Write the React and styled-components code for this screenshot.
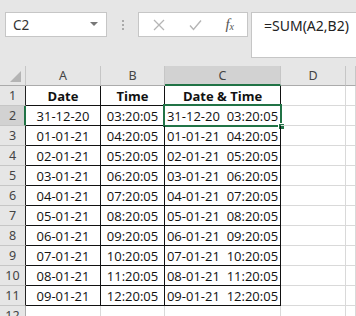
import React from 'react';
import styled, { createGlobalStyle } from 'styled-components';

const rows = [
  ['31-12-20', '03:20:05'],
  ['01-01-21', '04:20:05'],
  ['02-01-21', '05:20:05'],
  ['03-01-21', '06:20:05'],
  ['04-01-21', '07:20:05'],
  ['05-01-21', '08:20:05'],
  ['06-01-21', '09:20:05'],
  ['07-01-21', '10:20:05'],
  ['08-01-21', '11:20:05'],
  ['09-01-21', '12:20:05'],
];

const columns = ['A', 'B', 'C', 'D', ''];

export default function App() {
  return (
    <>
      <Global />
      <Toolbar>
        <NameBox>
          <span>C2</span>
          <Caret />
        </NameBox>
        <Grip>
          <i /><i /><i />
        </Grip>
        <FxBox>
          <svg width="14" height="14" viewBox="0 0 14 14">
            <path d="M2 2 L12 12 M12 2 L2 12" stroke="#b5b5b5" strokeWidth="1.3" fill="none" />
          </svg>
          <svg width="15" height="14" viewBox="0 0 15 14">
            <path d="M2 7.5 L5.5 11.5 L13 2.5" stroke="#b5b5b5" strokeWidth="1.4" fill="none" />
          </svg>
          <Fx>f<sub>x</sub></Fx>
        </FxBox>
        <FormulaInput>=SUM(A2,B2)</FormulaInput>
      </Toolbar>

      <Sheet>
        <Corner><Triangle /></Corner>
        {columns.map((c, i) => (
          <ColHead key={i} $active={c === 'C'}>{c}</ColHead>
        ))}

        <RowHead $table>1</RowHead>
        <Cell $table $bold>Date</Cell>
        <Cell $table $bold>Time</Cell>
        <Cell $table $bold>Date &amp; Time</Cell>
        <Cell />
        <Cell />

        {rows.map(([d, t], i) => (
          <React.Fragment key={i}>
            <RowHead $table $active={i === 0}>{i + 2}</RowHead>
            <Cell $table>{d}</Cell>
            <Cell $table>{t}</Cell>
            <Cell $table>
              {d}&nbsp;&nbsp;{t}
              {i === 0 && (
                <Selection>
                  <Handle />
                </Selection>
              )}
            </Cell>
            <Cell />
            <Cell />
          </React.Fragment>
        ))}

        {[12, 13].map((n) => (
          <React.Fragment key={n}>
            <RowHead>{n}</RowHead>
            <Cell /><Cell /><Cell /><Cell /><Cell />
          </React.Fragment>
        ))}
      </Sheet>
    </>
  );
}

const Global = createGlobalStyle`
  html, body {
    margin: 0;
    padding: 0;
    width: 356px;
    height: 316px;
    overflow: hidden;
    background: #ffffff;
  }
  * { box-sizing: border-box; }
`;

const Toolbar = styled.div`
  display: flex;
  align-items: flex-start;
  height: 67px;
  padding: 12px 0 0 5px;
  background: #e6e6e6;
  border-top: 1px solid #f2f2f2;
  margin-top: -1px;
  font-family: "Noto Sans", "Open Sans", sans-serif;
`;

const NameBox = styled.div`
  display: flex;
  align-items: center;
  justify-content: space-between;
  width: 102px;
  height: 25px;
  padding: 0 8px 0 7px;
  background: #fff;
  border: 1px solid #c6c6c6;
  font-size: 13.5px;
  color: #333;
`;

const Caret = styled.div`
  width: 0;
  height: 0;
  border-left: 4px solid transparent;
  border-right: 4px solid transparent;
  border-top: 4px solid #777;
  margin-top: -2px;
`;

const Grip = styled.div`
  display: flex;
  flex-direction: column;
  gap: 2px;
  margin: 8px 0 0 15px;
  i {
    display: block;
    width: 2px;
    height: 2px;
    background: #aaa;
  }
`;

const FxBox = styled.div`
  display: flex;
  align-items: center;
  justify-content: space-between;
  width: 110px;
  height: 25px;
  margin-left: 14px;
  padding: 0 13px 0 13px;
  background: #fff;
  border: 1px solid #c6c6c6;
`;

const Fx = styled.span`
  font-family: "Liberation Serif", serif;
  font-style: italic;
  font-size: 15px;
  color: #555;
  sub {
    font-size: 10px;
    vertical-align: -1px;
  }
`;

const FormulaInput = styled.div`
  flex: 1;
  height: 46px;
  margin-left: 3px;
  padding: 3px 0 0 12px;
  background: #fff;
  border: 1px solid #c6c6c6;
  border-right: none;
  font-size: 14px;
  color: #222;
`;

const Sheet = styled.div`
  display: grid;
  grid-template-columns: 26px 75px 64px 116px 65px 1fr;
  grid-auto-rows: 20px;
  font-family: "Open Sans", "Liberation Sans", sans-serif;
`;

const HeadBase = styled.div`
  display: flex;
  align-items: center;
  justify-content: center;
  font-family: "Noto Sans", "Open Sans", sans-serif;
  font-size: 12.5px;
  color: #444;
  background: #e6e6e6;
`;

const Corner = styled(HeadBase)`
  position: relative;
  border-right: 1px solid #c6c6c6;
  border-bottom: 1px solid #ababab;
`;

const Triangle = styled.div`
  position: absolute;
  right: 4px;
  bottom: 3px;
  width: 0;
  height: 0;
  border-left: 11px solid transparent;
  border-bottom: 11px solid #b4b4b4;
`;

const ColHead = styled(HeadBase)`
  background: ${(p) => (p.$active ? '#d2d2d2' : '#e6e6e6')};
  border-right: 1px solid #c6c6c6;
  border-bottom: ${(p) => (p.$active ? '2px solid #217346' : '1px solid #ababab')};
  padding-top: ${(p) => (p.$active ? '1px' : '0')};
`;

const RowHead = styled(HeadBase)`
  background: ${(p) => (p.$active ? '#d2d2d2' : '#e6e6e6')};
  border-right: ${(p) =>
    p.$active ? '2px solid #217346' : p.$table ? '1px solid #222' : '1px solid #ababab'};
  border-bottom: 1px solid #c6c6c6;
  padding-left: ${(p) => (p.$active ? '1px' : '0')};
`;

const Cell = styled.div`
  position: relative;
  display: flex;
  align-items: center;
  justify-content: center;
  white-space: nowrap;
  font-size: 13px;
  font-weight: ${(p) => (p.$bold ? 700 : 400)};
  color: #111;
  border-right: 1px solid ${(p) => (p.$table ? '#111' : '#d9d9d9')};
  border-bottom: 1px solid ${(p) => (p.$table ? '#111' : '#d9d9d9')};
`;

const Selection = styled.div`
  position: absolute;
  top: -2px;
  left: -2px;
  right: -2px;
  bottom: -2px;
  border: 2px solid #217346;
  pointer-events: none;
`;

const Handle = styled.div`
  position: absolute;
  right: -5px;
  bottom: -5px;
  width: 7px;
  height: 7px;
  background: #217346;
  border: 1px solid #fff;
`;
